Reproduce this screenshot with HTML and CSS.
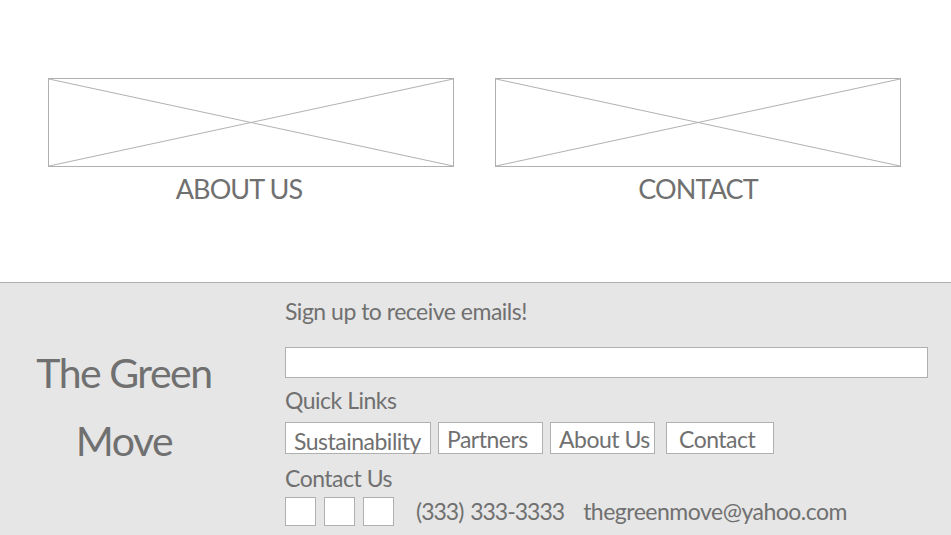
FILE: index.html
```html
<!DOCTYPE html>
<html lang="en">
<head>
  <meta charset="UTF-8">
  <meta name="viewport" content="width=device-width, initial-scale=1">
  <title>The Green Move</title>
  <link rel="stylesheet" href="styles.css">
</head>
<body>
  <div class="features">
    <div class="feature">
      <div class="placeholder">
        <svg viewBox="0 0 406 89" preserveAspectRatio="none">
          <line x1="0" y1="0" x2="406" y2="89"></line>
          <line x1="0" y1="89" x2="406" y2="0"></line>
        </svg>
      </div>
      <div class="feature-label label-left">ABOUT US</div>
    </div>
    <div class="feature">
      <div class="placeholder">
        <svg viewBox="0 0 406 89" preserveAspectRatio="none">
          <line x1="0" y1="0" x2="406" y2="89"></line>
          <line x1="0" y1="89" x2="406" y2="0"></line>
        </svg>
      </div>
      <div class="feature-label">CONTACT</div>
    </div>
  </div>

  <footer class="footer">
    <div class="brand">The Green<br>Move</div>
    <div class="footer-main">
      <div class="footer-title">Sign up to receive emails!</div>
      <input class="email-input" type="text">
      <div class="footer-heading">Quick Links</div>
      <div class="links">
        <a class="link-btn link-wide" href="#">Sustainability</a>
        <a class="link-btn" href="#">Partners</a>
        <a class="link-btn" href="#">About Us</a>
        <a class="link-btn link-last" href="#">Contact</a>
      </div>
      <div class="footer-heading">Contact Us</div>
      <div class="contact-row">
        <span class="social"></span>
        <span class="social"></span>
        <span class="social"></span>
        <span class="phone">(333) 333-3333</span>
        <span class="mail">thegreenmove@yahoo.com</span>
      </div>
    </div>
  </footer>
</body>
</html>
```

FILE: styles.css
```css
body {
  margin: 0;
  font-family: Lato, sans-serif;
  color: #707070;
  background: white;
}
.features {
  display: grid;
  grid-template-columns: 406px 406px;
  column-gap: 41px;
  padding: 78px 0 0 48px;
  height: 204px;
}
.placeholder {
  height: 89px;
  border: 1px solid #b0b0b0;
  box-sizing: border-box;
}
.placeholder svg {
  display: block;
  width: 100%;
  height: 100%;
}
.placeholder line {
  stroke: #b0b0b0;
  stroke-width: 1;
}
.feature-label {
  text-align: center;
  font-size: 27px;
  letter-spacing: -0.9px;
  line-height: 34px;
  margin-top: 5px;
}
.label-left {
  padding-right: 24px;
}
.footer {
  border-top: 1px solid #b0b0b0;
  background: #e6e6e6;
  display: grid;
  grid-template-columns: 285px 1fr;
  height: 252px;
}
.brand {
  text-align: center;
  font-size: 41px;
  letter-spacing: -1.5px;
  line-height: 68px;
  padding-right: 37px;
  padding-top: 56px;
}
.footer-main {
  padding: 14px 23px 0 0;
  font-size: 23px;
  letter-spacing: -0.5px;
  line-height: 29px;
}
.email-input {
  display: block;
  width: 100%;
  height: 31px;
  box-sizing: border-box;
  border: 1px solid #b0b0b0;
  background: white;
  margin: 21px 0 8px;
}
.links {
  display: flex;
  gap: 7px;
  margin: 7px 0 10px;
}
.link-btn {
  display: block;
  width: 105px;
  height: 32px;
  box-sizing: border-box;
  padding: 1px 0 0 8px;
  border: 1px solid #b0b0b0;
  background: white;
  color: #707070;
  text-decoration: none;
  line-height: 30px;
}
.link-wide {
  width: 146px;
  padding: 3px 0 0 8px;
}
.link-last {
  width: 108px;
  margin-left: 4px;
  padding-left: 12px;
}
.contact-row {
  display: flex;
  align-items: center;
  margin-top: 4px;
}
.social {
  width: 31px;
  height: 29px;
  box-sizing: border-box;
  border: 1px solid #b0b0b0;
  background: white;
  margin-right: 8px;
}
.phone {
  letter-spacing: -1px;
  word-spacing: 2px;
  margin-left: 14px;
  margin-right: 19px;
}
```
